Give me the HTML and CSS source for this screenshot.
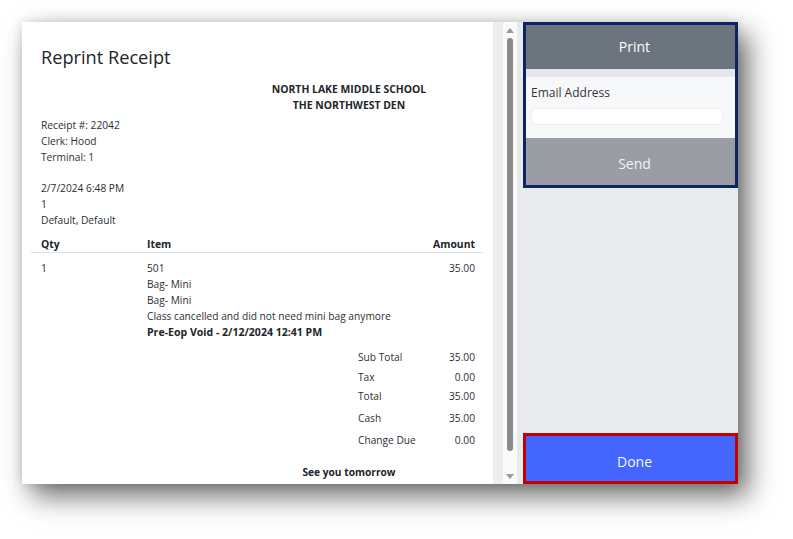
FILE: index.html
```html
<!DOCTYPE html>
<html>
<head>
<meta charset="utf-8">
<link rel="stylesheet" href="styles.css">
</head>
<body>
<div class="window">
  <div class="receipt-pane">
    <h1 class="title">Reprint Receipt</h1>
    <div class="store">
      <div>NORTH LAKE MIDDLE SCHOOL</div>
      <div>THE NORTHWEST DEN</div>
    </div>
    <div class="info">
      <div>Receipt #: 22042</div>
      <div>Clerk: Hood</div>
      <div>Terminal: 1</div>
    </div>
    <div class="info info-2">
      <div>2/7/2024 6:48 PM</div>
      <div>1</div>
      <div>Default, Default</div>
    </div>
    <div class="items">
      <div class="cell head">Qty</div>
      <div class="cell head">Item</div>
      <div class="cell head amount">Amount</div>
      <div class="cell body">1</div>
      <div class="cell body">
        <div>501</div>
        <div>Bag- Mini</div>
        <div>Bag- Mini</div>
        <div>Class cancelled and did not need mini bag anymore</div>
        <div class="bold">Pre-Eop Void - 2/12/2024 12:41 PM</div>
      </div>
      <div class="cell body amount">35.00</div>
    </div>
    <div class="totals">
      <span>Sub Total</span><span class="val">35.00</span>
      <span>Tax</span><span class="val">0.00</span>
      <span>Total</span><span class="val">35.00</span>
      <span>Cash</span><span class="val">35.00</span>
      <span>Change Due</span><span class="val">0.00</span>
    </div>
    <div class="footer-msg">See you tomorrow</div>
  </div>
  <div class="gutter"></div>
  <div class="scrollbar">
    <span class="arrow up"></span>
    <span class="thumb"></span>
    <span class="arrow down"></span>
  </div>
  <div class="side">
    <div class="actions">
      <div class="btn print">Print</div>
      <div class="strip"></div>
      <div class="email-form">
        <label class="email-label">Email Address</label>
        <div class="email-input"></div>
      </div>
      <div class="btn send">Send</div>
    </div>
    <div class="spacer"></div>
    <div class="btn done">Done</div>
  </div>
</div>
</body>
</html>
```
FILE: styles.css
```css
* { box-sizing: border-box; }
html, body { margin: 0; padding: 0; background: #ffffff; }
body {
  font-family: "Open Sans", "Noto Sans", sans-serif;
  color: #2b2f33;
  width: 793px;
  height: 539px;
  overflow: hidden;
}
.window {
  position: relative;
  margin: 22px 0 0 22px;
  width: 716px;
  height: 462px;
  display: flex;
  background: #fff;
  box-shadow: 0 0 10px rgba(0,0,0,0.12), 10px 12px 26px rgba(0,0,0,0.58);
}
.receipt-pane {
  width: 471px;
  background: #ffffff;
  padding: 23px 10px 0 9px;
  overflow: hidden;
  font-size: 10.2px;
  line-height: 16px;
}
.title {
  margin: 0 0 12px 10px;
  font-weight: 400;
  font-size: 18.2px;
  line-height: 24px;
  color: #212529;
}
.store {
  margin-left: 190px;
  width: 256px;
  text-align: center;
  font-weight: 700;
  font-size: 10.4px;
  color: #212529;
}
.info { margin: 4px 0 0 10px; }
.info-2 { margin-top: 15px; }
.items {
  margin-top: 8px;
  display: grid;
  grid-template-columns: 106px 1fr auto;
}
.cell { padding-left: 10px; }
.cell.amount { padding-right: 8px; text-align: right; }
.head {
  font-weight: 700;
  font-size: 10.4px;
  color: #212529;
  border-bottom: 1px solid #dee2e6;
}
.body { padding-top: 7px; }
.bold { font-weight: 700; font-size: 10.55px; color: #212529; }
.totals {
  margin: 9px 0 0 317px;
  width: 135px;
  padding: 0 8px 0 10px;
  display: grid;
  grid-template-columns: 1fr auto;
  grid-template-rows: 20px 19px 22px 22px 16px;
}
.totals .val { text-align: right; }
.footer-msg {
  margin-top: 16px;
  margin-left: 190px;
  width: 256px;
  text-align: center;
  font-weight: 700;
  color: #212529;
}
.gutter {
  width: 10px;
  background: #eceef1;
}
.scrollbar {
  width: 14px;
  background: #fafafa;
  display: flex;
  flex-direction: column;
  align-items: center;
  padding: 6px 0 5px;
}
.arrow {
  width: 0;
  height: 0;
  border-left: 4px solid transparent;
  border-right: 4px solid transparent;
}
.arrow.up { border-bottom: 5px solid #9a9a9a; }
.arrow.down { border-top: 5px solid #9a9a9a; }
.thumb {
  width: 6px;
  flex: 1;
  margin: 5px 0 23px;
  background: #8a8a8a;
  border-radius: 3px;
}
.side {
  width: 221px;
  background: #e9eaee;
  padding-left: 6px;
  display: flex;
  flex-direction: column;
}
.actions {
  height: 166px;
  border: 3px solid #0b2462;
  display: flex;
  flex-direction: column;
  background: #f7f8fa;
}
.btn {
  display: flex;
  align-items: center;
  justify-content: center;
  font-size: 14px;
  color: #ffffff;
  padding-left: 8px;
}
.print { height: 44px; background: #6c757d; padding-bottom: 2px; }
.strip { height: 8px; background: #e4e7eb; }
.email-form {
  height: 61px;
  padding: 6px 12px 0 5px;
  background: #f7f8fa;
}
.email-label {
  display: block;
  font-size: 12px;
  line-height: 20px;
  color: #30343a;
}
.email-input {
  margin-top: 5px;
  height: 17px;
  background: #ffffff;
  border: 1px solid #eceef0;
  border-radius: 5px;
}
.send { flex: 1; background: #9a9da3; color: #f2f2f4; padding-top: 3px; }
.spacer { flex: 1; }
.done {
  height: 51px;
  background: #4466ff;
  border: 3px solid #c40000;
  color: #f4f6ff;
  padding-top: 6px;
}
```
